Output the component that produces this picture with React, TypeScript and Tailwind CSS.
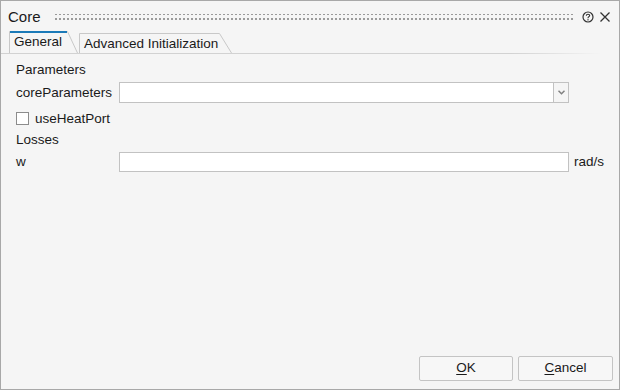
import React from "react";

function Tab({ label, active, width, left }: { label: string; active?: boolean; width: number; left: number }) {
  const h = active ? 22 : 20;
  const slant = active ? 10 : 12;
  return (
    <div className="relative" style={{ width, height: h, marginLeft: left }}>
      <svg className="absolute left-0 top-0" width={width} height={h}>
        <path
          d={`M0.5 ${h} L0.5 0.5 L${width - slant - 0.5} 0.5 L${width - 0.5} ${h}`}
          fill="#f5f5f5"
          stroke="#c8c8c8"
          strokeWidth="1"
        />
        {active && <rect x="1" y="0" width={width - slant - 2} height="2" fill="#1b7ab8" />}
      </svg>
      <span className="relative block pl-[5px] pt-[2px] text-[13.5px] leading-[18px] text-[#1a1a1a]">{label}</span>
    </div>
  );
}

export default function App() {
  return (
    <div
      className="w-[620px] h-[390px] bg-[#f5f5f5] border border-[#a8a8a8] flex flex-col text-[#1a1a1a]"
      style={{ fontFamily: '"Liberation Sans", Arial, sans-serif' }}
    >
      {/* title bar */}
      <div className="flex items-center h-[30px] pl-[7px] pr-[8px]">
        <span className="text-[15px] leading-[18px] mt-[2px]">Core</span>
        <svg className="ml-[14px] mt-[2px]" width="518" height="8">
          <defs>
            <pattern id="dots" width="4" height="5" patternUnits="userSpaceOnUse">
              <rect x="0" y="0" width="2" height="2" fill="#9a9a9a" />
            </pattern>
          </defs>
          <rect x="0" y="1" width="518" height="7" fill="url(#dots)" />
        </svg>
        <div className="flex-1" />
        <svg width="12" height="12" viewBox="0 0 12 12" className="mt-[2px]">
          <circle cx="6" cy="6" r="5" fill="none" stroke="#333" strokeWidth="1.2" />
          <path d="M4.3 4.7 Q4.3 3.2 6 3.2 Q7.7 3.2 7.7 4.6 Q7.7 5.5 6.5 6 Q6 6.3 6 7.2" fill="none" stroke="#333" strokeWidth="1.1" />
          <rect x="5.4" y="8.2" width="1.2" height="1.2" fill="#333" />
        </svg>
        <svg width="12" height="12" viewBox="0 0 12 12" className="ml-[5px] mt-[2px]">
          <path d="M1.5 1.5 L10.5 10.5 M10.5 1.5 L1.5 10.5" stroke="#333" strokeWidth="1.3" />
        </svg>
      </div>

      {/* tabs */}
      <div className="flex items-end h-[22px] ml-[8px]">
        <Tab label="General" active width={69} left={0} />
        <Tab label="Advanced Initialization" width={153} left={1} />
      </div>
      <div className="h-px w-[600px] bg-[linear-gradient(to_right,#d2d2d2_85%,#f5f5f5)]" />

      {/* content */}
      <div className="flex flex-col pl-[15px] pt-[7px] text-[13.5px] leading-[16px]">
        <div className="h-[18px] flex items-center">Parameters</div>
        <div className="flex items-center mt-[3px] h-[21px]">
          <span className="w-[103px]">coreParameters</span>
          <div className="w-[435px] h-[21px] bg-white border border-[#c2c2c2]" />
          <div className="w-[15px] h-[21px] border border-l-0 border-[#c2c2c2] bg-[#f5f5f5] flex items-center justify-center">
            <svg width="7" height="5" viewBox="0 0 7 5">
              <path d="M0.5 0.8 L3.5 3.8 L6.5 0.8" fill="none" stroke="#808080" strokeWidth="1.5" />
            </svg>
          </div>
        </div>
        <div className="flex items-center mt-[8px] h-[15px]">
          <div className="w-[13px] h-[13px] bg-white border border-[#8c8c8c]" />
          <span className="ml-[6px]">useHeatPort</span>
        </div>
        <div className="h-[18px] flex items-center mt-[5px]">Losses</div>
        <div className="flex items-center mt-[3px] h-[20px]">
          <span className="w-[103px]">w</span>
          <div className="w-[450px] h-[20px] bg-white border border-[#c2c2c2]" />
          <span className="ml-[5px]">rad/s</span>
        </div>
      </div>

      <div className="flex-1" />

      {/* buttons */}
      <div className="flex justify-end gap-[5px] pr-[6px] pb-[8px] text-[13.5px]">
        <button className="w-[94px] h-[25px] border border-[#c4c4c4] rounded-[2px] bg-[#f7f7f7]">
          <span className="underline underline-offset-2">O</span>K
        </button>
        <button className="w-[95px] h-[25px] border border-[#c4c4c4] rounded-[2px] bg-[#f7f7f7]">
          <span className="underline underline-offset-2">C</span>ancel
        </button>
      </div>
    </div>
  );
}
